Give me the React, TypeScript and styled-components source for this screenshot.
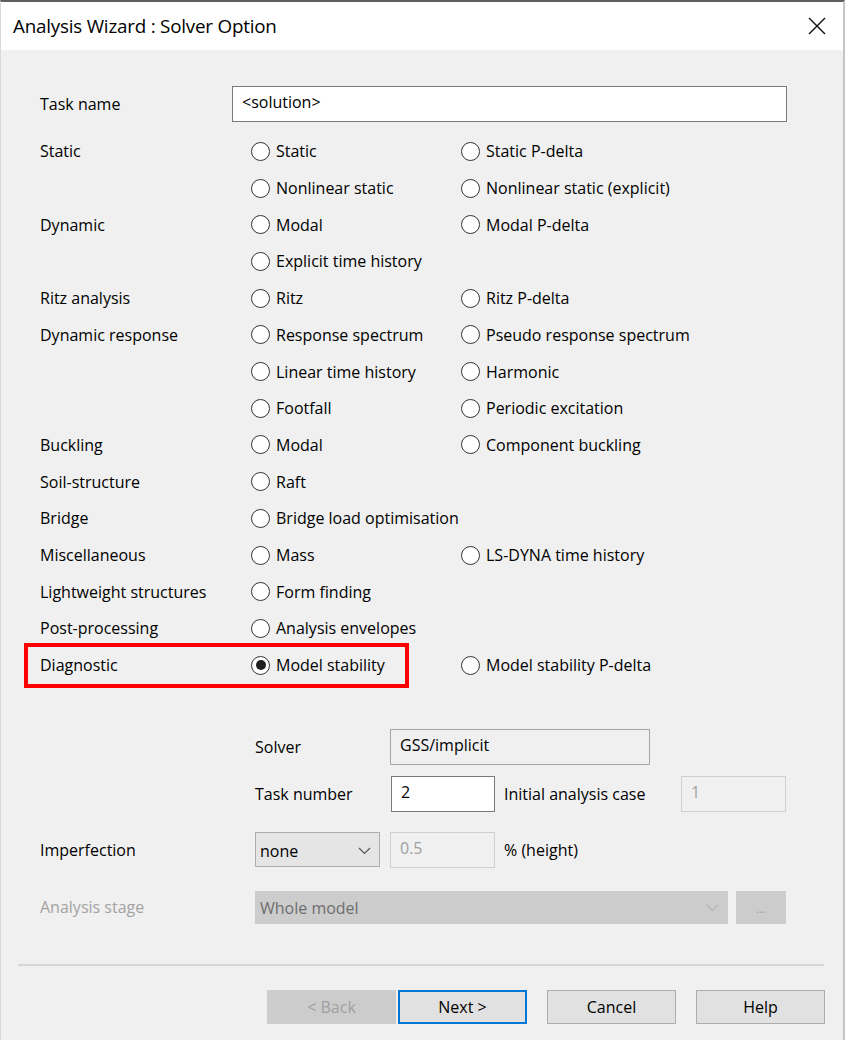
import { FC, ReactNode } from 'react';
import styled, { createGlobalStyle } from 'styled-components';

const GlobalStyle = createGlobalStyle`
    html, body {
        margin: 0;
        padding: 0;
        background: #ffffff;
    }
    body {
        font-family: 'Open Sans', 'Noto Sans', 'Liberation Sans', sans-serif;
        font-size: 16px;
        color: #000000;
    }
`;

const Dialog = styled.div`
    width: 845px;
    height: 1040px;
    box-sizing: border-box;
    border-top: 2px solid #5f5f5f;
    border-left: 1px solid #d9d9d9;
    border-right: 2px solid #c4c4c4;
    background: #f0f0f0;
    display: flex;
    flex-direction: column;
`;

const TitleBar = styled.div`
    height: 48px;
    background: #ffffff;
    display: flex;
    align-items: center;
    justify-content: space-between;
    padding: 0 14px 0 12px;
    flex-shrink: 0;
`;

const Title = styled.span`
    font-size: 18.8px;
    letter-spacing: -0.2px;
`;

const CloseButton = styled.button`
    border: none;
    background: transparent;
    padding: 0;
    width: 24px;
    height: 24px;
    display: flex;
    align-items: center;
    justify-content: center;
`;

const Body = styled.div`
    flex: 1;
    padding: 36px 0 0 39px;
    display: flex;
    flex-direction: column;
`;

const TaskRow = styled.div`
    display: flex;
    align-items: center;
    height: 35px;
    margin-bottom: 12px;
`;

const Label = styled.span<{ $width?: number; $muted?: boolean }>`
    width: ${({ $width }) => ($width ? `${$width}px` : 'auto')};
    flex-shrink: 0;
    color: ${({ $muted }) => ($muted ? '#a3a3a3' : '#000000')};
    white-space: nowrap;
`;

const TextInput = styled.div<{ $width: number; $height?: number }>`
    width: ${({ $width }) => $width}px;
    height: ${({ $height }) => $height ?? 36}px;
    box-sizing: border-box;
    background: #ffffff;
    border: 1px solid #7a7a7a;
    padding: 2px 9px 0;
    display: flex;
    align-items: flex-start;
    line-height: 26px;
    flex-shrink: 0;
`;

const ReadOnlyBox = styled(TextInput)<{ $disabled?: boolean }>`
    background: #f0f0f0;
    border-color: ${({ $disabled }) => ($disabled ? '#cfcfcf' : '#a6a6a6')};
    color: ${({ $disabled }) => ($disabled ? '#a0a0a0' : '#000000')};
`;

const OptionGrid = styled.div`
    display: grid;
    grid-template-columns: 211px 210px 1fr;
    grid-auto-rows: 36.71px;
    align-items: center;
`;

const OptionRow = styled.div`
    display: contents;
`;

const RadioItem = styled.label`
    display: flex;
    align-items: center;
    gap: 6px;
    white-space: nowrap;
`;

const RadioCircle = styled.span<{ $checked?: boolean }>`
    width: 19px;
    height: 19px;
    box-sizing: border-box;
    border-radius: 50%;
    border: 1.5px solid #333333;
    background: #ffffff;
    display: flex;
    align-items: center;
    justify-content: center;
    flex-shrink: 0;

    &::after {
        content: '';
        display: ${({ $checked }) => ($checked ? 'block' : 'none')};
        width: 10px;
        height: 10px;
        border-radius: 50%;
        background: #1f1f1f;
    }
`;

const HighlightCell = styled.div`
    position: relative;
    height: 100%;
    display: flex;
    align-items: center;
`;

const HighlightFrame = styled.div`
    position: absolute;
    left: -16px;
    top: -4px;
    width: 385px;
    height: 45px;
    box-sizing: border-box;
    border: 4px solid #ff0000;
    pointer-events: none;
`;

const Lower = styled.div`
    margin-top: 45px;
    display: flex;
    flex-direction: column;
`;

const FieldRow = styled.div<{ $indent?: number; $gap?: number }>`
    display: flex;
    align-items: center;
    padding-left: ${({ $indent }) => $indent ?? 0}px;
    margin-top: ${({ $gap }) => $gap ?? 0}px;
`;

const Spacer = styled.span<{ $width: number }>`
    width: ${({ $width }) => $width}px;
    flex-shrink: 0;
`;

const Select = styled.div<{ $width: number; $height: number; $disabled?: boolean }>`
    width: ${({ $width }) => $width}px;
    height: ${({ $height }) => $height}px;
    box-sizing: border-box;
    background: ${({ $disabled }) => ($disabled ? '#cccccc' : '#e5e5e5')};
    border: 1px solid ${({ $disabled }) => ($disabled ? '#cccccc' : '#adadad')};
    color: ${({ $disabled }) => ($disabled ? '#6e6e6e' : '#000000')};
    display: flex;
    align-items: center;
    justify-content: space-between;
    padding: 2px 8px 0 4px;
    flex-shrink: 0;
`;

const EllipsisButton = styled.div`
    width: 50px;
    height: 33px;
    box-sizing: border-box;
    background: #cccccc;
    color: #a0a0a0;
    display: flex;
    align-items: center;
    justify-content: center;
    font-size: 12px;
    padding-top: 3px;
`;

const Separator = styled.hr`
    margin: 40px 19px 0 -22px;
    border: none;
    height: 2px;
    background: #d6d6d6;
`;

const ButtonBar = styled.div`
    display: flex;
    justify-content: flex-end;
    gap: 20px;
    margin: 24px 18px 0 0;
`;

const ButtonPair = styled.div`
    display: flex;
    gap: 2px;
`;

const DialogButton = styled.button<{ $variant?: 'default' | 'disabled' | 'primary' }>`
    width: 129px;
    height: 34px;
    box-sizing: border-box;
    font: inherit;
    padding: 0;
    background: ${({ $variant }) => ($variant === 'disabled' ? '#cccccc' : '#e1e1e1')};
    color: ${({ $variant }) => ($variant === 'disabled' ? '#a0a0a0' : '#000000')};
    border: ${({ $variant }) =>
        $variant === 'primary'
            ? '2px solid #0078d7'
            : $variant === 'disabled'
              ? '1px solid #cccccc'
              : '1px solid #adadad'};
`;

const Chevron: FC<{ color: string }> = ({ color }) => (
    <svg width='13' height='8' viewBox='0 0 13 8'>
        <path d='M1 1 L6.5 6.5 L12 1' fill='none' stroke={color} strokeWidth='1.2' />
    </svg>
);

type Option = { text: string; checked?: boolean };

const Radio: FC<Option> = ({ text, checked }) => (
    <RadioItem>
        <RadioCircle $checked={checked} />
        {text}
    </RadioItem>
);

const rows: { label: string; options: (Option | null)[] }[] = [
    { label: 'Static', options: [{ text: 'Static' }, { text: 'Static P-delta' }] },
    { label: '', options: [{ text: 'Nonlinear static' }, { text: 'Nonlinear static (explicit)' }] },
    { label: 'Dynamic', options: [{ text: 'Modal' }, { text: 'Modal P-delta' }] },
    { label: '', options: [{ text: 'Explicit time history' }, null] },
    { label: 'Ritz analysis', options: [{ text: 'Ritz' }, { text: 'Ritz P-delta' }] },
    { label: 'Dynamic response', options: [{ text: 'Response spectrum' }, { text: 'Pseudo response spectrum' }] },
    { label: '', options: [{ text: 'Linear time history' }, { text: 'Harmonic' }] },
    { label: '', options: [{ text: 'Footfall' }, { text: 'Periodic excitation' }] },
    { label: 'Buckling', options: [{ text: 'Modal' }, { text: 'Component buckling' }] },
    { label: 'Soil-structure', options: [{ text: 'Raft' }, null] },
    { label: 'Bridge', options: [{ text: 'Bridge load optimisation' }, null] },
    { label: 'Miscellaneous', options: [{ text: 'Mass' }, { text: 'LS-DYNA time history' }] },
    { label: 'Lightweight structures', options: [{ text: 'Form finding' }, null] },
    { label: 'Post-processing', options: [{ text: 'Analysis envelopes' }, null] },
];

const Cell: FC<{ children?: ReactNode }> = ({ children }) => <div>{children}</div>;

const App: FC = () => (
    <>
        <GlobalStyle />
        <Dialog>
            <TitleBar>
                <Title>Analysis Wizard : Solver Option</Title>
                <CloseButton aria-label='Close'>
                    <svg width='18' height='18' viewBox='0 0 18 18'>
                        <path d='M1 1 L17 17 M17 1 L1 17' stroke='#111' strokeWidth='1.4' />
                    </svg>
                </CloseButton>
            </TitleBar>
            <Body>
                <TaskRow>
                    <Label $width={192}>Task name</Label>
                    <TextInput $width={555} $height={36}>&lt;solution&gt;</TextInput>
                </TaskRow>

                <OptionGrid>
                    {rows.map((row, i) => (
                        <OptionRow key={i}>
                            <Label>{row.label}</Label>
                            {row.options.map((opt, j) =>
                                opt ? <Radio key={j} {...opt} /> : <Cell key={j} />,
                            )}
                        </OptionRow>
                    ))}
                    <OptionRow>
                        <HighlightCell>
                            <HighlightFrame />
                            <Label>Diagnostic</Label>
                        </HighlightCell>
                        <Radio text='Model stability' checked />
                        <Radio text='Model stability P-delta' />
                    </OptionRow>
                </OptionGrid>

                <Lower>
                    <FieldRow $indent={215}>
                        <Label $width={135}>Solver</Label>
                        <ReadOnlyBox $width={260}>GSS/implicit</ReadOnlyBox>
                    </FieldRow>
                    <FieldRow $indent={215} $gap={11}>
                        <Label $width={136}>Task number</Label>
                        <TextInput $width={104}>2</TextInput>
                        <Spacer $width={9} />
                        <Label $width={177}>Initial analysis case</Label>
                        <ReadOnlyBox $width={105} $disabled>
                            1
                        </ReadOnlyBox>
                    </FieldRow>
                    <FieldRow $gap={20}>
                        <Label $width={215}>Imperfection</Label>
                        <Select $width={125} $height={35}>
                            none
                            <Chevron color='#555' />
                        </Select>
                        <Spacer $width={10} />
                        <ReadOnlyBox $width={105} $disabled>
                            0.5
                        </ReadOnlyBox>
                        <Spacer $width={9} />
                        <Label>% (height)</Label>
                    </FieldRow>
                    <FieldRow $gap={23}>
                        <Label $width={215} $muted>
                            Analysis stage
                        </Label>
                        <Select $width={473} $height={33} $disabled>
                            Whole model
                            <Chevron color='#b4b4b4' />
                        </Select>
                        <Spacer $width={8} />
                        <EllipsisButton>...</EllipsisButton>
                    </FieldRow>
                </Lower>

                <Separator />

                <ButtonBar>
                    <ButtonPair>
                        <DialogButton $variant='disabled'>&lt; Back</DialogButton>
                        <DialogButton $variant='primary'>Next &gt;</DialogButton>
                    </ButtonPair>
                    <DialogButton>Cancel</DialogButton>
                    <DialogButton>Help</DialogButton>
                </ButtonBar>
            </Body>
        </Dialog>
    </>
);

export default App;
